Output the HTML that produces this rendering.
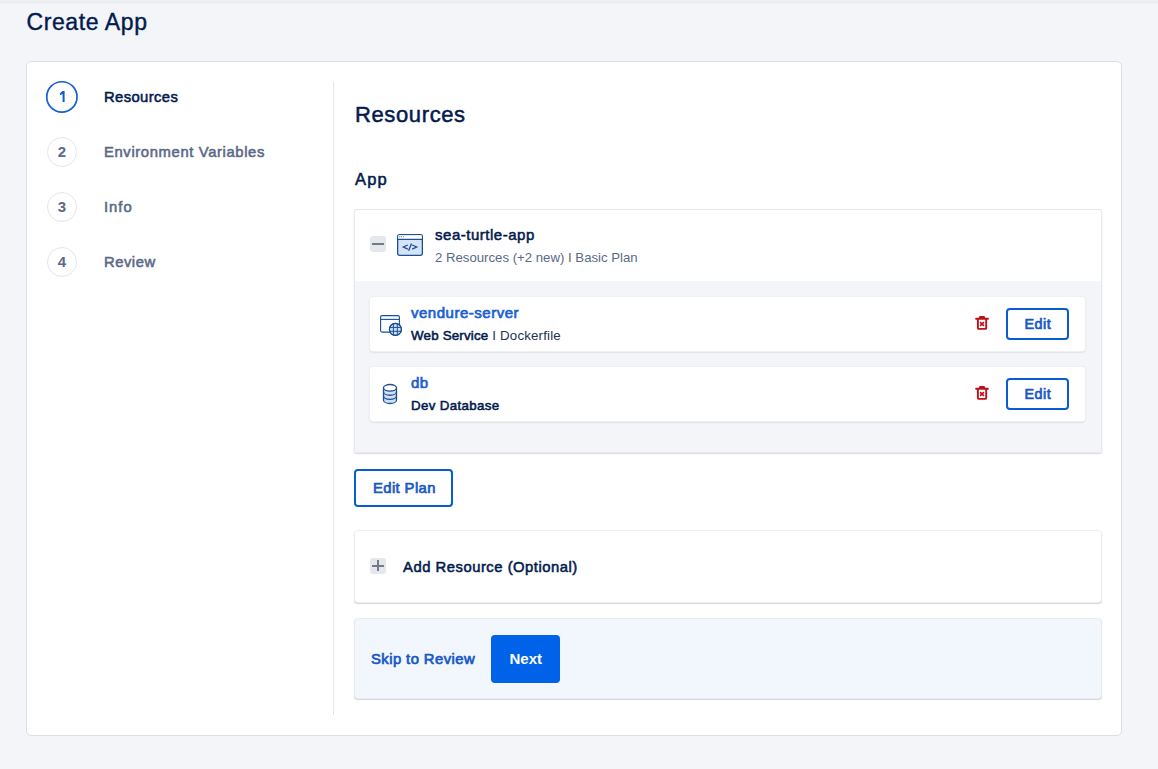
<!DOCTYPE html>
<html><head><meta charset="utf-8">
<style>
*{box-sizing:border-box;margin:0;padding:0}
html,body{width:1158px;height:769px;overflow:hidden;background:#f3f5f9;font-family:"Liberation Sans",sans-serif;color:#031b4e}
.a{position:absolute;white-space:pre}
#topbar{position:absolute;left:0;top:0;width:1158px;height:4px;background:linear-gradient(#f0f1f4,#ebecef 45%,#ebecf0 60%,#f2f3f7)}
#card{position:absolute;left:26px;top:61px;width:1096px;height:675px;background:#fff;border:1px solid #dcdee2;border-radius:5px}
#divider{position:absolute;left:333px;top:82px;width:1px;height:633px;background:#e3e6eb}
.circ{position:absolute;width:32px;height:32px;border-radius:50%;border:1px solid #e3e6eb;text-align:center;font-size:15px;font-weight:700;color:#5b6987;line-height:30px}
.circ.on{border:2px solid #0a5dd0;color:#0b5fd6;line-height:28px}
.step{font-size:14.6px;font-weight:700;color:#5b6987;line-height:15px}
.box{position:absolute;border-radius:4px}
#appbox{left:354px;top:209px;width:748px;height:244px;background:#f3f5f9;border:1px solid #e6e9ee;border-radius:2px;box-shadow:0 1px 1.5px rgba(0,0,0,.15)}
#apphead{position:absolute;left:0;top:0;width:746px;height:71px;background:#fff;border-radius:3px 3px 0 0}
.sub{position:absolute;left:370px;width:715px;height:54px;background:#fff;border-radius:3px;box-shadow:0 0 0 1px #edeff3,0 1px 2px rgba(0,0,0,.22),0 1px 1px rgba(0,0,0,.06)}
.editbtn{position:absolute;left:1006px;width:63px;height:32px;border:2px solid #0a5dd0;border-radius:4px;background:#fff}
#editplan{left:354px;top:469px;width:99px;height:38px;border:2px solid #0a5dd0;border-radius:4px;background:#fff}
#addres{left:354px;top:530px;width:748px;height:73px;background:#fff;border:1px solid #eceef2;box-shadow:0 1px 1px rgba(0,0,0,.17)}
#footer{left:354px;top:618px;width:748px;height:81px;background:#f2f7fd;border:1px solid #e8ecf2;box-shadow:0 1px 1px rgba(0,0,0,.17)}
#next{left:491px;top:635px;width:69px;height:48px;background:#0062e8;border-radius:4px}
.sb{font-weight:400!important;-webkit-text-stroke:.55px currentColor}
.sbl{-webkit-text-stroke:.7px currentColor}
.pm{position:absolute;width:16px;height:16px;background:#e4e7ec;border-radius:3px}
</style></head><body>
<div id="topbar"></div>
<div class="a" style="left:26.5px;top:10.6px;font-size:23px;line-height:23px;letter-spacing:.6px;-webkit-text-stroke:.4px #031b4e;color:#031b4e">Create App</div>

<div id="card"></div>
<div id="divider"></div>

<svg style="position:absolute;left:45px;top:80px" width="34" height="34" viewBox="0 0 34 34">
  <circle cx="16.9" cy="16.9" r="15.15" fill="#fff" stroke="#1460d6" stroke-width="1.7"/>
  <path d="M17.6 11 H19.6 V22 H17.6 V13.9 L15 15.3 V13.2 Z" fill="#1459c8"/>
</svg>
<div class="circ" style="left:47px;top:137px;width:30px;height:30px;line-height:28px">2</div>
<div class="circ" style="left:47px;top:192px;width:30px;height:30px;line-height:28px">3</div>
<div class="circ" style="left:47px;top:247px;width:30px;height:30px;line-height:28px">4</div>
<div class="a step sb" style="left:104px;top:89.6px;color:#031b4e;font-size:14.8px;letter-spacing:.39px">Resources</div>
<div class="a step sb" style="left:104px;top:144.6px;font-size:14.8px;letter-spacing:.63px">Environment Variables</div>
<div class="a step sb" style="left:104px;top:199.6px;font-size:14.8px;letter-spacing:1px">Info</div>
<div class="a step sb" style="left:104px;top:254.6px;font-size:14.8px;letter-spacing:.52px">Review</div>

<div class="a" style="left:355px;top:104.4px;font-size:22px;line-height:22px;letter-spacing:.62px;-webkit-text-stroke:.5px #031b4e">Resources</div>
<div class="a sb" style="left:355px;top:170.7px;font-size:16.5px;line-height:16.5px;letter-spacing:1.2px">App</div>

<div id="appbox" class="box"><div id="apphead"></div></div>
<div class="pm" style="left:370px;top:236px"><div style="position:absolute;left:2px;top:7px;width:12px;height:1.8px;background:#737b8b"></div></div>
<svg style="position:absolute;left:397px;top:234px" width="26" height="22" viewBox="0 0 26 22">
  <rect x="0.65" y="0.65" width="24.7" height="20.7" rx="1.8" fill="#d5e3f8" stroke="#1d4f91" stroke-width="1.3"/>
  <rect x="1.3" y="1.3" width="23.4" height="3.5" fill="#fff"/>
  <line x1="1" y1="5.4" x2="25" y2="5.4" stroke="#1d4f91" stroke-width="1.2"/>
  <circle cx="2.8" cy="2.7" r=".5" fill="#1d4f91"/><circle cx="4.5" cy="2.7" r=".5" fill="#1d4f91"/><circle cx="6.4" cy="2.7" r=".5" fill="#1d4f91"/>
  <path d="M10.8 11 L6.3 13 L10.8 15.2 M15.2 11 L19.7 13 L15.2 15.2 M14.5 9.6 L11.6 16.7" fill="none" stroke="#1d4f91" stroke-width="1.3"/>
</svg>
<div class="a sb" style="left:435px;top:227.3px;font-size:15px;line-height:15px;letter-spacing:.52px">sea-turtle-app</div>
<div class="a" style="left:435px;top:250.6px;font-size:13.2px;line-height:13.2px;color:#5b6987">2 Resources (+2 new) I Basic Plan</div>

<div class="sub" style="top:297px"></div>
<div class="sub" style="top:367px"></div>

<div class="a sb sbl" style="left:411px;top:305px;font-size:15px;line-height:15px;letter-spacing:.51px;color:#1a60d4">vendure-server</div>
<div class="a" style="left:411px;top:328.5px;font-size:13.3px;line-height:13.3px"><span class="sb" style="letter-spacing:.21px">Web Service</span><span style="color:#24334f;font-weight:400;letter-spacing:.17px"> I Dockerfile</span></div>
<div class="a sb sbl" style="left:411px;top:374.8px;font-size:15px;line-height:15px;letter-spacing:.5px;color:#1a60d4">db</div>
<div class="a sb" style="left:411px;top:399px;font-size:13.3px;line-height:13.3px;letter-spacing:.36px">Dev Database</div>


<svg style="position:absolute;left:379px;top:314px" width="24" height="24" viewBox="0 0 24 24">
  <defs><clipPath id="gc"><circle cx="16.4" cy="15.4" r="6"/></clipPath></defs>
  <rect x="1.6" y="1.6" width="18.8" height="16.5" rx="1.5" fill="#fafcff" stroke="#1d4f91" stroke-width="1.1"/>
  <line x1="1.6" y1="5.4" x2="20.4" y2="5.4" stroke="#1d4f91" stroke-width="1.1"/>
  <circle cx="16.4" cy="15.4" r="6" fill="#cfe0fa" stroke="#1d4f91" stroke-width="1.1"/>
  <g clip-path="url(#gc)" stroke="#1d4f91" stroke-width="1">
    <line x1="14.4" y1="8" x2="14.4" y2="23"/><line x1="18.3" y1="8" x2="18.3" y2="23"/>
    <line x1="9" y1="13.4" x2="24" y2="13.4"/><line x1="9" y1="17.3" x2="24" y2="17.3"/>
  </g>
  <circle cx="16.4" cy="15.4" r="6" fill="none" stroke="#1d4f91" stroke-width="1.1"/>
</svg>
<svg style="position:absolute;left:381px;top:383px" width="18" height="22" viewBox="0 0 18 22">
  <path d="M2.5 4.8 V17.2 A6.5 3.3 0 0 0 15.5 17.2 V4.8" fill="#cfe0fa" stroke="#1d4f91" stroke-width="1.3"/>
  <path d="M2.5 8.95 A6.5 3.3 0 0 0 15.5 8.95 M2.5 13.1 A6.5 3.3 0 0 0 15.5 13.1" fill="none" stroke="#1d4f91" stroke-width="1.3"/>
  <ellipse cx="9" cy="4.8" rx="6.5" ry="3.3" fill="#fff" stroke="#1d4f91" stroke-width="1.3"/>
</svg>
<svg style="position:absolute;left:974px;top:315px" width="16" height="16" viewBox="0 0 16 16">
  <path d="M4.6 3.2 L5.5 1 H10.5 L11.4 3.2 Z" fill="#bd1018"/>
  <rect x="1.2" y="2.8" width="13.6" height="1.9" rx=".6" fill="#bd1018"/>
  <path d="M3.9 4 V12.9 Q3.9 13.9 4.9 13.9 H11.2 Q12.2 13.9 12.2 12.9 V4" fill="none" stroke="#bd1018" stroke-width="1.9"/>
  <path d="M6.1 7.1 L9.9 10.9 M9.9 7.1 L6.1 10.9" stroke="#bd1018" stroke-width="1.6"/>
</svg>
<svg style="position:absolute;left:974px;top:385px" width="16" height="16" viewBox="0 0 16 16">
  <path d="M4.6 3.2 L5.5 1 H10.5 L11.4 3.2 Z" fill="#bd1018"/>
  <rect x="1.2" y="2.8" width="13.6" height="1.9" rx=".6" fill="#bd1018"/>
  <path d="M3.9 4 V12.9 Q3.9 13.9 4.9 13.9 H11.2 Q12.2 13.9 12.2 12.9 V4" fill="none" stroke="#bd1018" stroke-width="1.9"/>
  <path d="M6.1 7.1 L9.9 10.9 M9.9 7.1 L6.1 10.9" stroke="#bd1018" stroke-width="1.6"/>
</svg>
<div class="editbtn" style="top:308px"></div>
<div class="editbtn" style="top:378px"></div>
<div class="a sb sbl" style="left:1024.5px;top:316.6px;font-size:14.3px;line-height:14px;letter-spacing:.55px;color:#1758c4">Edit</div>
<div class="a sb sbl" style="left:1024.5px;top:386.6px;font-size:14.3px;line-height:14px;letter-spacing:.55px;color:#1758c4">Edit</div>

<div id="editplan" class="box"></div>
<div class="a sb sbl" style="left:373px;top:480.8px;font-size:14.8px;line-height:14.4px;letter-spacing:.4px;color:#1758c4">Edit Plan</div>

<div id="addres" class="box"></div>
<div class="pm" style="left:370px;top:558px"><div style="position:absolute;left:2px;top:7.1px;width:12px;height:1.7px;background:#737b8b"></div><div style="position:absolute;left:7.1px;top:2px;width:1.7px;height:11.3px;background:#737b8b"></div></div>
<div class="a sb" style="left:403px;top:559.8px;font-size:14.8px;line-height:14.7px;letter-spacing:.52px">Add Resource (Optional)</div>

<div id="footer" class="box"></div>
<div class="a sb sbl" style="left:371px;top:652.2px;font-size:14.8px;line-height:14.8px;letter-spacing:.44px;color:#1758c4">Skip to Review</div>
<div id="next" class="box"></div>
<div class="a" style="left:509.5px;top:650.9px;font-size:15px;line-height:15px;font-weight:700;color:#fff">Next</div>
</body></html>
